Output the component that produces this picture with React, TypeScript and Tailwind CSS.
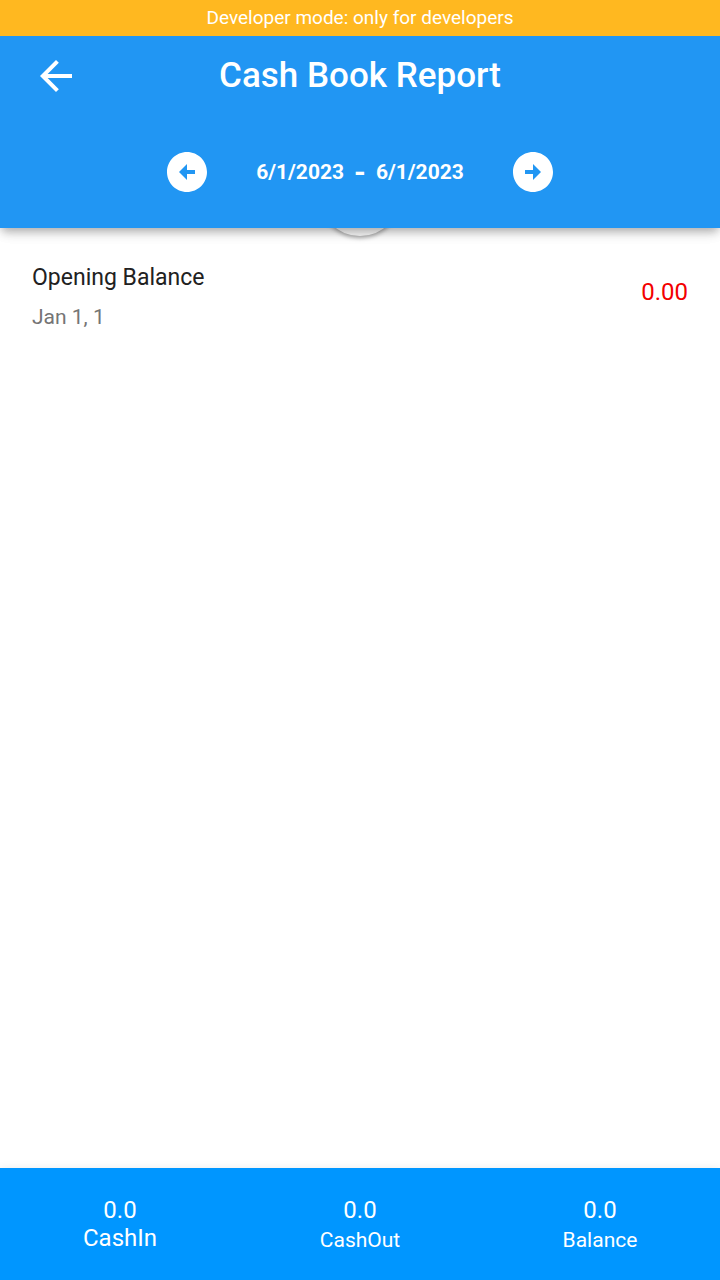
import React from 'react';
import { MdArrowBack, MdArrowCircleLeft, MdArrowCircleRight } from 'react-icons/md';

interface Entry {
    title: string;
    date: string;
    amount: string;
}

interface Total {
    label: string;
    value: string;
    labelClass: string;
}

const entries: Entry[] = [
    { title: 'Opening Balance', date: 'Jan 1, 1', amount: '0.00' },
];

const totals: Total[] = [
    { label: 'CashIn', value: '0.0', labelClass: 'text-2xl leading-7' },
    { label: 'CashOut', value: '0.0', labelClass: 'text-[21px] leading-8' },
    { label: 'Balance', value: '0.0', labelClass: 'text-[21px] leading-8' },
];

// App bar with the title and the date range picker
const ReportHeader: React.FC = () => {
    return (
        <header className="relative z-10 bg-[#2196f3] text-white shadow-[0_4px_8px_-2px_rgba(0,0,0,0.2),0_8px_10px_-2px_rgba(0,0,0,0.12),0_2px_16px_0_rgba(0,0,0,0.08)]">
            <div className="grid grid-cols-[48px_1fr_48px] items-center px-8 py-4">
                <button aria-label="Back">
                    <MdArrowBack className="size-12" />
                </button>
                <h1 className="text-center text-[35px] leading-10 font-medium">Cash Book Report</h1>
            </div>
            <div className="flex items-center justify-center gap-[45px] py-8">
                <button aria-label="Previous day">
                    <MdArrowCircleLeft className="size-12" />
                </button>
                <div className="flex items-center gap-[10px] text-[21px] leading-6 font-bold">
                    <span>6/1/2023</span>
                    <span className="text-3xl leading-6">-</span>
                    <span>6/1/2023</span>
                </div>
                <button aria-label="Next day">
                    <MdArrowCircleRight className="size-12" />
                </button>
            </div>
        </header>
    );
};

const EntryRow: React.FC<{ entry: Entry }> = ({ entry }) => {
    return (
        <li className="flex items-start justify-between px-8">
            <div>
                <p className="text-[23px] leading-8 text-[#212121]">{entry.title}</p>
                <p className="mt-[7px] text-[21px] leading-8 text-[#757575]">{entry.date}</p>
            </div>
            <span className="text-2xl leading-[60px] text-[#f30000]">{entry.amount}</span>
        </li>
    );
};

const App: React.FC = () => {
    return (
        <div className="flex min-h-screen flex-col bg-white font-[Roboto,sans-serif]">
            <div className="relative z-20 bg-[#ffb820] py-1 text-center text-[19px] leading-7 text-white">
                Developer mode: only for developers
            </div>
            <ReportHeader />
            <main className="relative flex-1">
                {/* Refresh indicator, mostly tucked under the header */}
                <div className="absolute -top-[74px] left-1/2 size-[82px] -translate-x-1/2 rounded-full bg-[#fafafa] shadow-[0_2px_4px_rgba(0,0,0,0.35)]" />
                <ul className="relative pt-[34px]">
                    {entries.map(entry => (
                        <EntryRow key={entry.title} entry={entry} />
                    ))}
                </ul>
            </main>
            <footer className="grid grid-cols-3 bg-[#0096ff] pt-7 pb-6 text-center text-white shadow-[0_0_8px_rgba(0,0,0,0.08)]">
                {totals.map(total => (
                    <div key={total.label}>
                        <p className="text-2xl leading-7">{total.value}</p>
                        <p className={total.labelClass}>{total.label}</p>
                    </div>
                ))}
            </footer>
        </div>
    );
};

export default App;
